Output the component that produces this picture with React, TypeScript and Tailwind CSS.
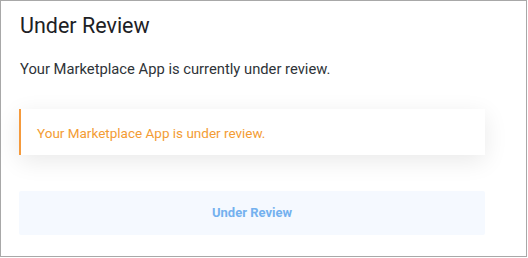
export default function App() {
  return (
    <div
      className="w-[527px] h-[257px] border border-[#a8a8a8] bg-white"
      style={{ fontFamily: 'Roboto, "Liberation Sans", sans-serif' }}
    >
      <div className="pl-[18px] pr-[41px] pt-[10px]">
        <h1 className="text-[21.5px] leading-[30px] text-[#1d2125] pl-px">Under Review</h1>
        <p className="mt-[18px] text-[14.75px] leading-[20px] text-[#2e3338] pl-px">
          Your Marketplace App is currently under review.
        </p>
        <div className="mt-[30px] h-[46px] flex items-center border-l-2 border-[#f59a3c] bg-white pl-[16px] pt-[2px] shadow-[0_6px_24px_rgba(0,0,0,0.09)]">
          <span className="text-[13.5px] text-[#f39c34]">Your Marketplace App is under review.</span>
        </div>
        <button className="mt-[36px] w-full h-[44px] flex items-center justify-center bg-[#f5f9ff] rounded-[2px]">
          <span className="text-[13px] font-bold text-[#74b1ef]">Under Review</span>
        </button>
      </div>
    </div>
  );
}
